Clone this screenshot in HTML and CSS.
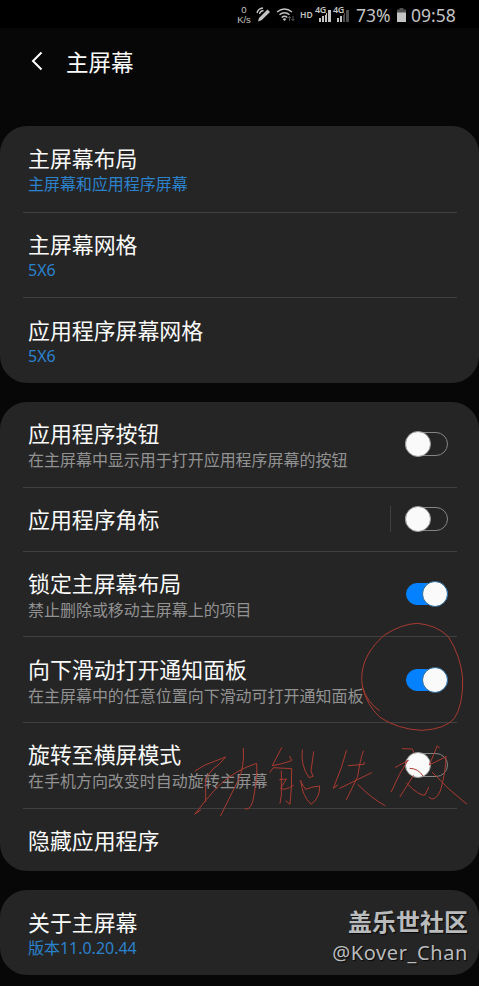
FILE: index.html
```html
<!DOCTYPE html>
<html lang="zh-CN">
<head>
<meta charset="utf-8">
<title>主屏幕</title>
<link rel="stylesheet" href="styles.css">
</head>
<body>
<div class="screen">
  <div class="status">
    <div class="speed"><span>0</span><span>K/s</span></div>
    <svg class="pen" width="15" height="16" viewBox="0 0 15 16"><path d="M3 11 11.500 2.500 14 5 5.500 13.200 2 14.500Z" fill="#c4c4c4"/><path d="M1 6Q2 1.500 7 1M3.500 7Q4 4 7.500 3.500" fill="none" stroke="#c4c4c4" stroke-width="1.300"/></svg>
    <svg class="wifi" width="20" height="16" viewBox="0 0 20 16"><path d="M1 5Q8.500-1 16 5M3.500 7.800Q8.500 3.600 13.500 7.800M5.700 10.500Q8.500 8 11.300 10.500" fill="none" stroke="#c4c4c4" stroke-width="1.500"/><path d="M6.600 12Q8.500 10.500 10.400 12L8.500 14Z" fill="#c4c4c4"/><path d="M13.500 14V9.500M12 11l1.500-1.500L15 11M17 9v4.500M15.500 12l1.500 1.500 1.500-1.500" fill="none" stroke="#555"/></svg>
    <span class="hd">HD</span>
    <div class="signal"><span>4G</span><svg width="18" height="14" viewBox="0 0 18 14"><path d="M4 10h2v4H4zM7 8h2v6H7zM10 5h2v9h-2zM13 2h3v12h-3z" fill="#c4c4c4"/></svg></div>
    <div class="signal"><span>4G</span><svg width="18" height="14" viewBox="0 0 18 14"><path d="M4 10h2v4H4zM7 8h2v6H7z" fill="#c4c4c4"/><path d="M10 5h2v9h-2zM13 2h3v12h-3z" fill="#4c4c4c"/></svg></div>
    <span class="percent">73%</span>
    <svg class="battery" width="9" height="14" viewBox="0 0 9 14"><path d="M2.500 0h4v1.500H9V5H0V1.500h2.500z" fill="#505050"/><path d="M0 4.500h9V14H0z" fill="#c4c4c4"/></svg>
    <span class="clock">09:58</span>
  </div>
  <header class="header">
    <svg width="12" height="20" viewBox="0 0 12 20"><path d="M10.500 1.500 2 10l8.500 8.500" fill="none" stroke="#fff" stroke-width="2"/></svg>
    <h1>主屏幕</h1>
  </header>

  <section class="card">
    <div class="row"><div class="label"><h2>主屏幕布局</h2><p class="value">主屏幕和应用程序屏幕</p></div></div>
    <div class="row"><div class="label"><h2>主屏幕网格</h2><p class="value">5X6</p></div></div>
    <div class="row"><div class="label"><h2>应用程序屏幕网格</h2><p class="value">5X6</p></div></div>
  </section>

  <section class="card">
    <div class="row first"><div class="label"><h2>应用程序按钮</h2><p>在主屏幕中显示用于打开应用程序屏幕的按钮</p></div><i class="switch"></i></div>
    <div class="row short"><div class="label"><h2>应用程序角标</h2></div><i class="separator"></i><i class="switch"></i></div>
    <div class="row"><div class="label"><h2>锁定主屏幕布局</h2><p>禁止删除或移动主屏幕上的项目</p></div><i class="switch on"></i></div>
    <div class="row"><div class="label"><h2>向下滑动打开通知面板</h2><p>在主屏幕中的任意位置向下滑动可打开通知面板</p></div><i class="switch on"></i></div>
    <div class="row"><div class="label"><h2>旋转至横屏模式</h2><p>在手机方向改变时自动旋转主屏幕</p></div><i class="switch"></i></div>
    <div class="row short"><div class="label"><h2>隐藏应用程序</h2></div></div>
  </section>

  <section class="card about">
    <div class="row"><div class="label"><h2>关于主屏幕</h2><p class="value">版本11.0.20.44</p></div></div>
    <div class="watermark"><strong>盖乐世社区</strong><span>@Kover_Chan</span></div>
  </section>

  <svg class="ink" width="479" height="986" viewBox="0 0 479 986">
    <g transform="translate(350 610) scale(.33333)">
      <path d="M88 302Q50 275 38 232C28 180 45 125 105 74Q155 42 202 40Q260 45 295 80Q333 140 338 205Q340 285 313 325Q285 358 215 361Q145 358 90 322Q50 285 38 232"/>
    </g>
    <g transform="translate(185 735) scale(.33333)">
      <path d="M30 108 60 90 122 66Q105 88 84 102L62 130V200"/>
      <path d="M30 237Q65 190 98 155Q150 105 215 85Q218 120 207 180Q201 228 180 222"/>
      <path d="M30 237 47 225M175 40Q179 95 160 135L107 242"/>
      <path d="M290 38 262 92Q290 88 320 77L314 64M255 112 265 98 320 101Q321 155 315 208L303 198M289 108V180L285 205M284 134 304 132 287 160Q300 168 325 151"/>
      <path d="M352 45Q346 90 372 128L384 124 378 108 386 50M348 138Q350 180 378 208Q405 190 404 153Q380 155 362 163L345 137"/>
    </g>
    <g transform="translate(325 735) scale(.33333)">
      <path d="M64 47 50 95 25 160 38 150M70 92 117 88 118 82M44 160 140 113M115 48Q105 75 98 125L64 194M99 149Q140 190 180 212"/>
      <path d="M232 41 262 42 267 53M211 97 250 76M248 77Q222 115 199 170M255 100Q280 100 294 123M265 122 225 185M245 145Q285 185 300 180L311 157"/>
      <path d="M343 39 337 32 313 90 363 65M363 65Q363 105 347 165Q330 205 312 187M322 112Q370 165 425 207"/>
    </g>
  </svg>
</div>
</body>
</html>
```
FILE: styles.css
```css
*, *::after { box-sizing: border-box; }
body {
  margin: 0;
  background: #070707;
  color: #fafafa;
  font-family: "Noto Sans CJK SC", sans-serif;
}
h1, h2, p { margin: 0; font-weight: 400; }
.screen { position: relative; width: 479px; height: 986px; overflow: hidden; }
.status {
  display: flex;
  align-items: center;
  height: 28px;
  padding: 1px 0 0 236px;
  background: #000;
  color: #c4c4c4;
  font-family: "Noto Sans", sans-serif;
  white-space: nowrap;
}
.speed { display: flex; flex-direction: column; align-items: center; width: 16px; font: 9.5px/10px "Liberation Sans", sans-serif; }
.speed span { height: 10px; }
.pen { margin-left: 4px; }
.wifi { margin-left: 5px; }
.hd { width: 13px; margin-left: 4px; font-size: 8.5px; font-weight: 600; }
.signal { display: flex; position: relative; width: 18px; }
.hd + .signal { margin-left: 2px; }
.signal svg { margin-top: 1px; }
.signal span { position: absolute; left: 0; top: -3px; font-size: 9px; line-height: 11px; font-weight: 600; background: #000; letter-spacing: -.5px; }
.percent { width: 36px; margin-left: 5px; font-size: 17.5px; }
.battery { margin-left: 5px; }
.clock { margin-left: 5px; font-size: 17.5px; }
.header { display: flex; align-items: center; height: 98px; padding: 0 0 32px 31px; }
.header h1 { margin: -1px 0 0 23px; font-size: 22.5px; line-height: 32px; }
.card { margin-bottom: 19px; padding: 0 22px 0 23px; border-radius: 27px; background: #252525; }
.row { display: flex; align-items: center; height: 85.67px; padding: 0 9px 0 5px; }
.row + .row { border-top: 1px solid #404040; }
.row.first { height: 85px; }
.row.short { height: 63.6px; }
.label { flex: 1; white-space: nowrap; }
h2 { font-size: 21.9px; line-height: 30px; }
.label p { font-size: 15.97px; line-height: 22px; color: #929292; }
.label .value { color: #2b82cd; font-family: "Noto Sans", "Noto Sans CJK SC", sans-serif; }
.switch {
  position: relative;
  flex: none;
  width: 43px;
  height: 24px;
  border: 1px solid #858585;
  border-radius: 12px;
}
.switch::after {
  content: "";
  position: absolute;
  left: -1px;
  top: -2px;
  width: 26px;
  height: 26px;
  border: 1px solid #999;
  border-radius: 50%;
  background: #fafafa;
}
.switch.on { width: 42px; height: 22px; background: #0381fe; border-color: #0381fe; }
.switch.on::after { left: auto; right: -1px; top: -3px; border-color: #276797; }
.separator { width: 1px; height: 26px; margin-right: 14px; background: #404040; }
.about { display: flex; height: 85px; }
.about .row { flex: 1; height: 85px; }
.watermark {
  display: flex;
  flex-direction: column;
  align-items: flex-end;
  padding-top: 15px;
  margin-right: -11px;
  color: #b9bbbd;
  text-shadow: 1px 1px 1px #080808;
}
.watermark strong { font-size: 24px; line-height: 32px; }
.watermark span { font: 20px/31px "Noto Sans", sans-serif; letter-spacing: .6px; }
.ink { position: absolute; left: 0; top: 0; pointer-events: none; }
.ink path { fill: none; stroke: #aa3a30; stroke-width: 3; stroke-linecap: round; stroke-linejoin: round; }
```
